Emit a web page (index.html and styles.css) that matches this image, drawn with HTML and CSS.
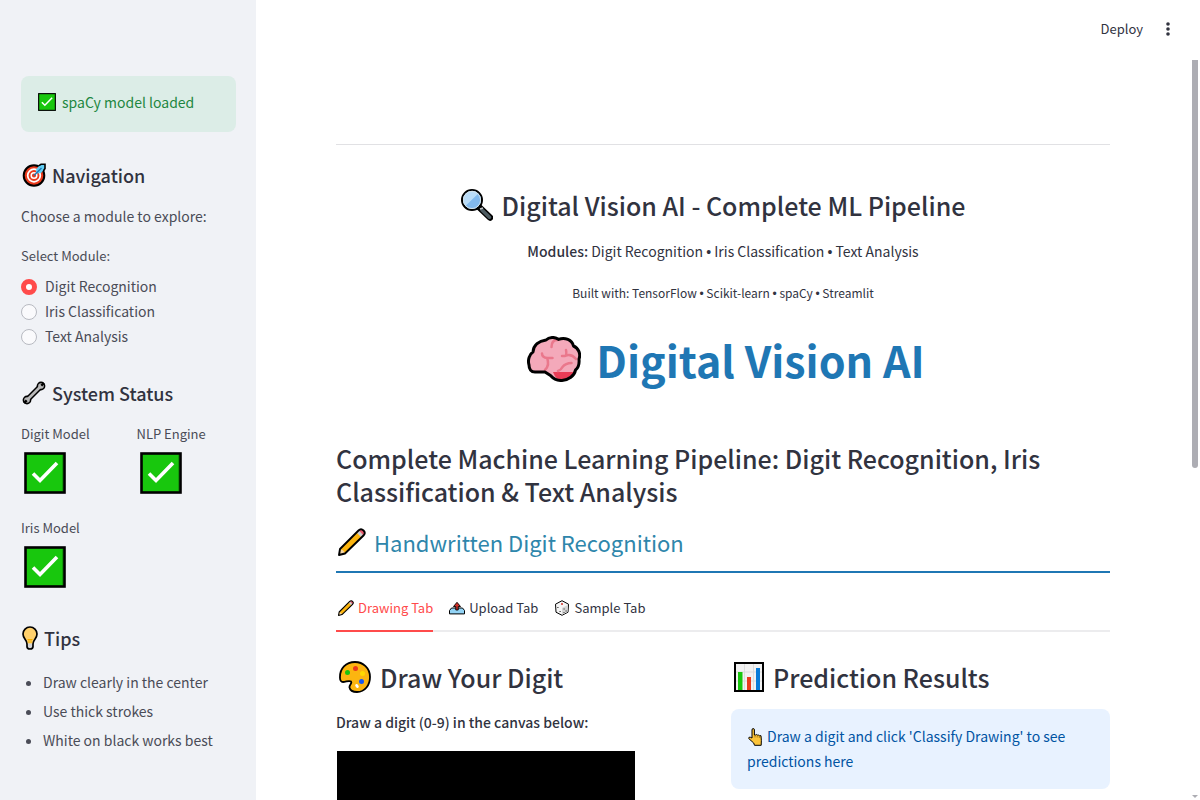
FILE: index.html
```
<!DOCTYPE html>
<html lang="en">
<head>
<meta charset="utf-8">
<meta name="viewport" content="width=device-width, initial-scale=1">
<title>Digital Vision AI</title>
<link rel="stylesheet" href="styles.css">
</head>
<body>
<svg class="defs" aria-hidden="true">
  <symbol id="check" viewBox="0 0 42 42">
    <rect x="1.5" y="1.5" width="39" height="39" fill="#18c70d" stroke="#000" stroke-width="2.6"/>
    <path d="M38.5 3v36" stroke="#129b0a" stroke-width="1"/>
    <path d="M9 21.500l7 7L33 11" fill="none" stroke="#fff" stroke-width="3.6"/>
  </symbol>
  <symbol id="target" viewBox="0 0 24 24">
    <circle cx="12" cy="12.500" r="10.300" fill="#ea3a1c" stroke="#000" stroke-width="2"/>
    <circle cx="12" cy="12.500" r="6.300" fill="none" stroke="#fff" stroke-width="1.700"/>
    <circle cx="12" cy="12.500" r="2.800" fill="#ea3a1c" stroke="#fff" stroke-width="1.500"/>
    <path d="M14 9.500l.3-3.500L18 2l5-.5-.4 4.500L19 10l-4 .6z" fill="#61cff5"/>
    <path d="M17 2.600l2-1.300h4v4.200l-1.600 2.500" fill="none" stroke="#000" stroke-width="1.600"/>
    <path d="M12 12.500l7.500-7.500" stroke="#1e78b5" stroke-width="1.400"/>
  </symbol>
  <symbol id="wrench" viewBox="0 0 24 24">
    <path d="M5 19L19 5" stroke="#000" stroke-width="5.600"/>
    <circle cx="19" cy="5" r="4.400"/><circle cx="5" cy="19" r="4.400"/>
    <path d="M5 19L19 5" stroke="#b9b9b9" stroke-width="2.600"/>
    <circle cx="19" cy="5" r="2.800" fill="#b9b9b9"/><circle cx="5" cy="19" r="2.800" fill="#b9b9b9"/>
    <path d="M19.300 4.700l2.700-2.700M4.700 19.300L2 22" stroke="#000" stroke-width="2.400"/>
  </symbol>
  <symbol id="bulb" viewBox="0 0 16 24">
    <path d="M5 13h6v7.500q0 2.500-3 2.500t-3-2.500z" fill="#d5d5d5"/>
    <path d="M8 1a7 7 0 0 0-7 7c0 3 1.400 4.500 3 6.500.8 1 .8 2 .8 3h6.400c0-1 0-2 .8-3C13.600 12.500 15 11 15 8a7 7 0 0 0-7-7z" fill="#ffd06b"/>
    <path d="M5.500 13.500h5M7 14v3M9 14v3" stroke="#f5ae00" stroke-width="1"/>
    <path d="M8 1a7 7 0 0 0-7 7c0 5 4 5.500 4 10v2.500Q5 23 8 23t3-2.500V18c0-4.500 4-5 4-10a7 7 0 0 0-7-7z" fill="none" stroke="#000" stroke-width="1.700"/>
  </symbol>
  <symbol id="lens" viewBox="0 0 32 32">
    <path d="M18.500 18.500l10.500 10" stroke="#000" stroke-width="6.500" stroke-linecap="round"/>
    <path d="M21 21l7.500 7.200" stroke="#4d5b61" stroke-width="3.600" stroke-linecap="round"/>
    <path d="M19 20l3-1" stroke="#c4c9cc" stroke-width="1.800"/>
    <circle cx="11" cy="11" r="10" fill="#92d3f5" stroke="#000" stroke-width="2"/>
    <path d="M4.500 17A9 9 0 0 1 17.500 4.500z" fill="#b9dcf8"/>
    <path d="M4.500 17L17.500 4.500A9 9 0 0 1 4.500 17z" fill="#82b9ed"/>
    <circle cx="11" cy="11" r="8.600" fill="none" stroke="#d5e2e9" stroke-width="1"/>
  </symbol>
  <symbol id="brain" viewBox="0 0 54 46">
    <path d="M19 4c3-3 9-3.500 12.500-.6C38 .8 45 4 46.500 10c5 2 7.500 8 5.500 13 .5 5-1 9-3.500 11-1 6-7 10-13.500 10.500-4 .2-8-1-11.500-5L18 36H8c-4 0-6-3-6-7-1.500-5 .5-11 4-13 .5-7 6-11 13-12z" fill="#f4a9ba"/>
    <path d="M26 36h22c-2 6-7 9-13.500 9Q29 44 26 36z" fill="#ea3c56"/>
    <path d="M30.500 4q-6 0-6 7M15 17.500q0 4 5.500 4.500h5M20 22q3 7-2 12M39 14q1 5-1 6h-3m3 0q6-3 11 3M31 35q3-1 4.500-4 3-4 9-4" fill="none" stroke="#ea788c" stroke-width="2.500" stroke-linecap="round"/>
    <path d="M19 4c3-3 9-3.500 12.500-.6C38 .8 45 4 46.500 10c5 2 7.500 8 5.500 13 .5 5-1 9-3.500 11-1 6-7 10-13.500 10.500-4 .2-8-1-11.500-5L18 36H8c-4 0-6-3-6-7-1.500-5 .5-11 4-13 .5-7 6-11 13-12z" fill="none" stroke="#000" stroke-width="3" stroke-linejoin="round"/>
  </symbol>
  <symbol id="pencil" viewBox="0 0 28 28">
    <path d="M2 21L20.500 2.500q2.500-2.500 5 0t0 5L7 25.500l-6 1.500z" fill="#fcb510"/>
    <path d="M1 27l1.500-5.500q3 0 4.500 4z" fill="#f6d7a6"/>
    <path d="M18.500 4.500l2-2q2.500-2.500 5 0t0 5l-2 2z" fill="#d0cfce"/>
    <path d="M21 2.500q2-2 4.500 0t0 5z" fill="#ea5a6e"/>
    <path d="M2 21L20.500 2.500q2.500-2.500 5 0t0 5L7 25.500l-6 1.500z" fill="none" stroke="#000" stroke-width="1.900" stroke-linejoin="round"/>
  </symbol>
  <symbol id="upload" viewBox="0 0 16 13">
    <path d="M.5 12.400V9l2-2.500h11l2 2.500v3.400z" fill="#92d3f5" stroke="#000" stroke-width="1" stroke-linejoin="round"/>
    <path d="M8 .8L4.500 5H6.800v3.500h2.400V5h2.300z" fill="#d22f27" stroke="#000" stroke-width=".9" stroke-linejoin="round"/>
  </symbol>
  <symbol id="die" viewBox="0 0 16 16">
    <path d="M8 .7l6.500 3.500-.5 8L8 15.300 2 12.200 1.500 4.200z" fill="#f5f5f5" stroke="#000" stroke-width="1" stroke-linejoin="round"/>
    <path d="M8 8v6.700l5.500-2.800.4-7z" fill="#d4d4d4"/>
    <circle cx="8" cy="4" r="1" fill="#d22f27"/>
    <path d="M3.300 7.500h1.200M5.500 11.500h1.200M9.500 9h1.200M11.500 11h1.200M9.500 12.500h1" stroke="#333" stroke-width="1"/>
  </symbol>
  <symbol id="palette" viewBox="0 0 32 32">
    <path d="M1 17C.5 7.500 7 1 16 1c8 0 15 6 15 15 0 8-5 15-13 15-4 0-7-2-7.500-4.500-.5-3 3-4 1.500-6C10 19 7 21 4 21c-2 0-3-2-3-4z" fill="#fcb510" stroke="#000" stroke-width="1.800"/>
    <circle cx="8.500" cy="11.500" r="2.500" fill="#19c30e"/><circle cx="16.500" cy="7.500" r="2.500" fill="#ea3a1c"/><circle cx="23.500" cy="12.500" r="2.500" fill="#ffd900"/><circle cx="22.500" cy="20.500" r="2.500" fill="#1557f5"/><ellipse cx="18" cy="25" rx="1.500" ry="2.200" transform="rotate(-35 18 25)" fill="#fff"/>
  </symbol>
  <symbol id="chart" viewBox="0 0 30 30">
    <rect x="1" y="1" width="28" height="28" fill="#f2f2f2" stroke="#000" stroke-width="2"/>
    <path d="M10.500 2v26M19.500 2v26M2 10h26M2 19h26" stroke="#dcdcdc" stroke-width="1"/>
    <path d="M4 10h4.500v18H4z" fill="#18c70d"/><path d="M13 15h4v13h-4z" fill="#ea3a1c"/><path d="M22 6h4v22h-4z" fill="#087bd9"/>
  </symbol>
  <symbol id="hand" viewBox="0 0 14 18">
    <path d="M4 10V2q0-1.500 1.200-1.500T6.400 2v5h1.200l.8-.5 1 .6h1.100l1 .6H13c.5 3 .4 6 .2 9.600H6.500L5.700 15 .7 10.500q0-2 1.800-1.200z" fill="#fcc43a" stroke="#000" stroke-width="1" stroke-linejoin="round"/>
    <path d="M7 7v2.500M9.200 7.500v2M11.300 8v2" stroke="#8a6410" stroke-width=".7"/>
  </symbol>
</svg>
<div class="app">
  <aside class="sidebar">
    <div class="alert success"><svg class="i18"><use href="#check"/></svg><span>spaCy model loaded</span></div>
    <h3 class="side-title"><svg class="i24"><use href="#target"/></svg>Navigation</h3>
    <p class="intro">Choose a module to explore:</p>
    <fieldset class="modules">
      <legend class="label">Select Module:</legend>
      <label><input type="radio" name="module" checked>Digit Recognition</label>
      <label><input type="radio" name="module">Iris Classification</label>
      <label><input type="radio" name="module">Text Analysis</label>
    </fieldset>
    <h3 class="side-title"><svg class="i24"><use href="#wrench"/></svg>System Status</h3>
    <div class="metrics">
      <div class="metric"><span class="label">Digit Model</span><svg role="img" aria-label="Ready"><use href="#check"/></svg></div>
      <div class="metric"><span class="label">NLP Engine</span><svg role="img" aria-label="Ready"><use href="#check"/></svg></div>
      <div class="metric"><span class="label">Iris Model</span><svg role="img" aria-label="Ready"><use href="#check"/></svg></div>
    </div>
    <h3 class="side-title"><svg class="bulb"><use href="#bulb"/></svg>Tips</h3>
    <ul class="tips"><li>Draw clearly in the center</li><li>Use thick strokes</li><li>White on black works best</li></ul>
  </aside>
  <div class="page">
    <header class="toolbar">
      <button type="button">Deploy</button>
      <button type="button" class="more" aria-label="Main menu"><svg viewBox="0 0 4 14"><circle cx="2" cy="2" r="1.800"/><circle cx="2" cy="7" r="1.800"/><circle cx="2" cy="12" r="1.800"/></svg></button>
    </header>
    <main class="main">
      <hr>
      <section class="banner">
        <h3 class="heading"><svg class="i32"><use href="#lens"/></svg>Digital Vision AI - Complete ML Pipeline</h3>
        <p><strong>Modules:</strong> Digit Recognition <span class="dot">•</span> Iris Classification <span class="dot">•</span> Text Analysis</p>
        <p class="built">Built with: TensorFlow <span class="dot">•</span> Scikit-learn <span class="dot">•</span> spaCy <span class="dot">•</span> Streamlit</p>
        <h1><svg><use href="#brain"/></svg>Digital Vision AI</h1>
      </section>
      <h3 class="heading summary">Complete Machine Learning Pipeline: Digit Recognition, Iris Classification &amp; Text Analysis</h3>
      <h2><svg><use href="#pencil"/></svg>Handwritten Digit Recognition</h2>
      <div class="tabs" role="tablist">
        <button type="button" role="tab" aria-selected="true"><svg><use href="#pencil"/></svg>Drawing Tab</button>
        <button type="button" role="tab" aria-selected="false"><svg><use href="#upload"/></svg>Upload Tab</button>
        <button type="button" role="tab" aria-selected="false"><svg><use href="#die"/></svg>Sample Tab</button>
      </div>
      <div class="columns">
        <section>
          <h3 class="heading"><svg class="i32"><use href="#palette"/></svg>Draw Your Digit</h3>
          <p class="prompt">Draw a digit (0-9) in the canvas below:</p>
          <canvas class="pad" width="298" height="298"></canvas>
        </section>
        <section>
          <h3 class="heading chart"><svg><use href="#chart"/></svg>Prediction Results</h3>
          <div class="alert info"><svg><use href="#hand"/></svg>Draw a digit and click 'Classify Drawing' to see predictions here</div>
        </section>
      </div>
    </main>
    <div class="scroll" aria-hidden="true"><div class="thumb"></div><div class="arrow"></div></div>
  </div>
</div>
</body>
</html>
```
FILE: styles.css
```
* { box-sizing: border-box; }
body { margin: 0; color: #31333f; background: #fff; font: 14px/24px "Noto Sans CJK SC", "Noto Sans", sans-serif; }
h1, h2, h3, p, ul { margin: 0; padding: 0; }
button { border: 0; padding: 0; background: none; color: inherit; font: inherit; }
svg { flex: none; }
.defs { position: absolute; width: 0; height: 0; }
.app { display: grid; grid-template-columns: 256px minmax(0, 1fr); height: 100vh; overflow: hidden; }

.sidebar { padding: 76px 20px 20px 21px; background: #f0f2f6; overflow: hidden; }
.alert { border-radius: 8px; padding: 16px; }
.success { display: flex; align-items: center; gap: 5px; padding: 14px 16px 18px; background: #dcede7; color: #1e8741; }
.i18 { width: 20px; height: 18px; }
.i24 { width: 24px; height: 24px; }
.i32 { width: 32px; height: 32px; }
.bulb { width: 16px; height: 24px; }
.side-title { display: flex; align-items: center; gap: 6px; margin-top: 31px; padding-left: 1px; font-size: 18px; font-weight: 500; line-height: 24px; }
.intro { margin-top: 17px; }
.label { padding: 0; font-size: 13px; line-height: 20px; }
.sidebar p, .label, .modules, .tips { color: #4a4c57; }
.modules { margin: 18px 0 0; padding: 0; border: 0; }
.modules legend { margin-bottom: 8px; }
.modules label { display: flex; align-items: center; gap: 8px; line-height: 25px; }
.modules input { appearance: none; width: 16px; height: 16px; margin: 0; border: 1px solid #b8bac1; border-radius: 50%; background: #fafafc; }
.modules input:checked { border: 5px solid #ff4b4b; background: #fff; }
.modules + .side-title { margin-top: 32px; }
.metrics { display: grid; grid-template-columns: 1fr 1fr; gap: 24px 16px; margin-top: 19px; }
.metric .label { display: block; margin-bottom: 8px; }
.metric svg { display: block; width: 42px; height: 42px; margin-left: 3px; }
.metrics + .side-title { margin-top: 38px; }
.tips { margin-top: 18px; padding-left: 22px; line-height: 29px; }

.page { position: relative; min-width: 0; overflow: hidden; }
.toolbar { display: flex; justify-content: flex-end; align-items: center; gap: 23px; height: 60px; padding: 0 30px 2px 0; font-size: 13px; }
.more { display: flex; }
.more svg { width: 4px; height: 14px; fill: #31333f; }
.main { padding: 84px 90px 0 80px; }
hr { height: 1px; margin: 0 0 43px; border: 0; background: #e1e1e4; }
.banner { text-align: center; }
.heading { font-size: 25px; font-weight: 500; line-height: 34px; }
.banner .heading, .columns .heading { display: flex; align-items: center; gap: 9px; }
.banner .heading { justify-content: center; padding-right: 20px; }
.banner p { margin-top: 17px; }
.banner .built { margin-top: 18px; font-size: 12px; }
.banner strong, .prompt { font-weight: 500; }
.dot { font-family: "Liberation Sans", sans-serif; line-height: 1; }
h1 { display: flex; justify-content: center; align-items: center; gap: 15px; margin-top: 26px; padding-left: 6px; color: #1f77b4; font-size: 43px; font-weight: 700; line-height: 56px; }
h1 svg { width: 54px; height: 46px; }
.summary { margin-top: 55px; line-height: 33px; }
h2 { display: flex; align-items: center; gap: 8px; margin-top: 18px; padding: 0 0 13px 2px; border-bottom: 2px solid #1f77b4; color: #2e86ab; font-size: 22px; font-weight: 400; line-height: 32px; }
h2 svg { width: 28px; height: 28px; }
.tabs { display: flex; gap: 14px; margin-top: 15px; border-bottom: 2px solid #ececee; font-size: 13px; line-height: 40px; }
.tabs button { display: flex; align-items: center; gap: 4px; margin-bottom: -2px; padding: 0 0 2px 2px; border-bottom: 2px solid transparent; }
.tabs svg { width: 16px; height: 16px; }
.tabs [aria-selected="true"] { border-color: #ff4b4b; color: #ff4b4b; }
.columns { display: grid; grid-template-columns: 1fr 1fr; gap: 16px; margin-top: 28px; }
.columns .heading { padding-left: 3px; }
.columns .chart svg { width: 30px; height: 30px; }
.prompt { margin-top: 16px; }
.pad { display: block; margin: 17px 0 0 1px; background: #000; }
.info { margin-top: 15px; padding: 15px 16px; background: #e8f2ff; color: #0054a3; line-height: 25px; }
.info svg { width: 14px; height: 18px; margin: 0 5px 0 1px; vertical-align: -4px; }
.scroll { position: absolute; top: 60px; right: 2px; bottom: 2px; width: 6px; display: flex; flex-direction: column; justify-content: space-between; }
.thumb { height: 408px; max-height: 56%; border-radius: 0 0 3px 3px; background: #adadb3; }
.arrow { border: 3px solid transparent; border-top-color: #adadb3; border-bottom: 0; }
```
